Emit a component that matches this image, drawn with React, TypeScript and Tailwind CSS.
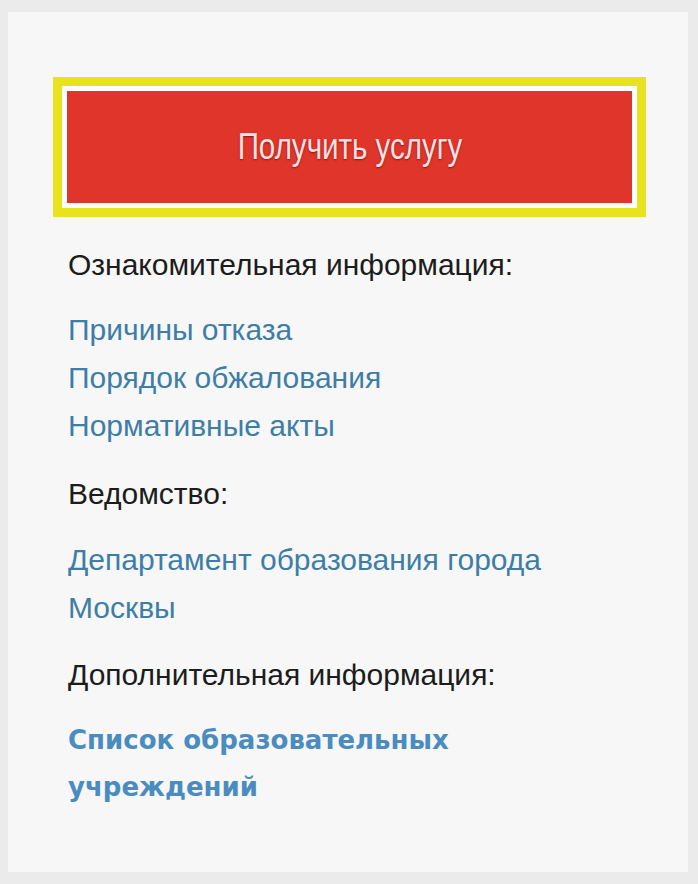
import React from 'react';

const infoLinks = ['Причины отказа', 'Порядок обжалования', 'Нормативные акты'];

const App: React.FC = () => {
  return (
    <div className="min-h-[884px] w-full bg-[#ebebeb] pt-[12px] pb-[12px] pl-[8px] pr-[10px]">
      <div className="h-[860px] bg-[#f7f7f7] pl-[45px] pr-[42px] pt-[65px] font-['Liberation_Sans',Arial,sans-serif]">
        {/* Main action */}
        <div className="border-[9px] border-[#e8e21f] bg-white p-[5px]">
          <button className="flex h-[112px] w-full items-center justify-center bg-[#e0352b] text-[#f6e3e1]">
            <span className="inline-block scale-x-[0.82] text-[36px] [text-shadow:0_1px_2px_rgba(90,0,0,0.6)]">
              Получить услугу
            </span>
          </button>
        </div>

        <div className="pl-[15px] text-[30px] leading-[48px]">
          <p className="mt-[24px] text-[#1c1c1c]">Ознакомительная информация:</p>
          <div className="mt-[17px] flex flex-col text-[#3e7ea6]">
            {infoLinks.map(l => (
              <a key={l} href="#" className="block">{l}</a>
            ))}
          </div>

          <p className="mt-[20px] text-[#1c1c1c]">Ведомство:</p>
          <a href="#" className="mt-[18px] block text-[#3e7ea6]">
            Департамент образования города<br />Москвы
          </a>

          <p className="mt-[19px] text-[#1c1c1c]">Дополнительная информация:</p>
          <a href="#" className="mt-[18px] block text-[26px] leading-[47px] font-bold text-[#4a8cc0] font-['DejaVu_Sans',Verdana,sans-serif]">
            Список образовательных<br />учреждений
          </a>
        </div>
      </div>
    </div>
  );
};

export default App;
